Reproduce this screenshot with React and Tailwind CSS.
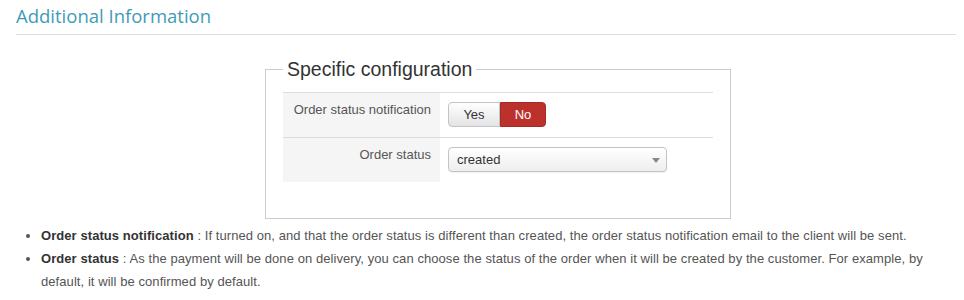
const sans = "font-['Liberation_Sans',Arial,sans-serif]";

const Row = ({ label, children }) => (
  <div className="flex h-[45px] border-t border-[#ddd]">
    <div className="w-[157px] bg-[#f5f5f5] pt-2 pr-[9px] text-right text-[13px] leading-[18px] text-[#555]">
      {label}
    </div>
    <div className="flex-1 pl-2 pt-[9px]">{children}</div>
  </div>
);

const App = () => {
  return (
    <div className={`min-h-[300px] bg-white pl-4 pr-2 ${sans}`}>
      <div className="border-b border-[#ddd] pt-1 pb-[6px]">
        <h2 className="font-['Open_Sans',sans-serif] text-[18.5px] leading-6 text-[#3f9bb6]">Additional Information</h2>
      </div>

      <fieldset className="mt-[23px] ml-[249px] w-[466px] border border-[#ccc] px-[17px] pt-3 pb-[36px]">
        <legend className="px-1 text-[19.5px] leading-[22px] text-[#333]">Specific configuration</legend>
        <div className="w-[430px]">
          <Row label="Order status notification">
            <div className="flex text-[13px]">
              <button className="h-[25px] w-[52px] rounded-l-[4px] border border-[#c4c4c4] bg-linear-to-b from-white to-[#e4e4e4] text-[#333]">Yes</button>
              <button className="h-[25px] w-[46px] rounded-r-[4px] border border-[#a82a24] bg-[#bd312c] text-white">No</button>
            </div>
          </Row>
          <Row label="Order status">
            <div className="relative flex h-[25px] w-[219px] items-center rounded-[4px] border border-[#c4c4c4] bg-linear-to-b from-white to-[#eeeeee] pl-2 text-[13px] text-[#333] shadow-[0_1px_1px_rgba(0,0,0,0.06)]">
              created
              <span className="absolute right-[6px] top-[10px] h-0 w-0 border-x-[4px] border-t-[5px] border-x-transparent border-t-[#888]" />
            </div>
          </Row>
        </div>
      </fieldset>

      <ul className="mt-[5px] list-disc pl-[25px] text-[13px] leading-[23px] tracking-[0.07px] text-[#555] marker:text-[#555]">
        <li>
          <b className="text-[#333]">Order status notification</b> : If turned on, and that the order status is different than created, the order status notification email to the client will be sent.
        </li>
        <li>
          <b className="text-[#333]">Order status</b> : As the payment will be done on delivery, you can choose the status of the order when it will be created by the customer. For example, by default, it will be confirmed by default.
        </li>
      </ul>
    </div>
  );
};

export default App;
